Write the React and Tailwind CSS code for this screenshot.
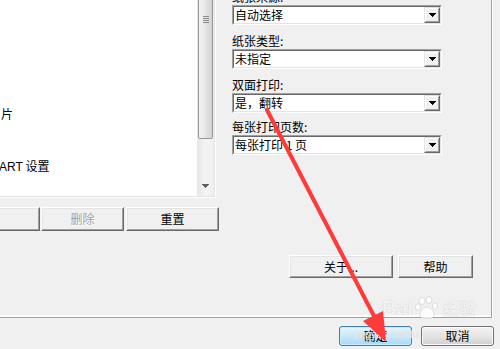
import React from 'react';

const DropArrow = () => (
  <svg width="7" height="4" viewBox="0 0 7 4" className="block">
    <path d="M0 0h7v1H0zM1 1h5v1H1zM2 2h3v1H2zM3 3h1v1H3z" fill="#000" />
  </svg>
);

const Combo = ({ value }) => (
  <div className="w-[210px] h-[20px] border border-t-[#a0a0a0] border-l-[#a0a0a0] border-r-white border-b-white">
    <div className="h-full flex items-stretch bg-white border border-t-[#696969] border-l-[#696969] border-r-[#e3e3e3] border-b-[#e3e3e3]">
      <span className="flex-1 pl-[1px] text-[12px] leading-[16px] text-black whitespace-nowrap">{value}</span>
      <div className="w-[16px] h-[16px] bg-[#f0f0f0] border border-t-[#e3e3e3] border-l-[#e3e3e3] border-r-[#696969] border-b-[#696969]">
        <div className="h-full flex items-center justify-center border border-t-white border-l-white border-r-[#a0a0a0] border-b-[#a0a0a0]">
          <DropArrow />
        </div>
      </div>
    </div>
  </div>
);

const Label = ({ children, className }) => (
  <div className={`h-[14px] text-[12px] leading-[14px] text-black whitespace-nowrap ${className}`}>{children}</div>
);

const ClassicBtn = ({ className, children, disabled }) => (
  <div className={`shrink-0 bg-[#f0f0f0] border border-t-white border-l-white border-r-[#696969] border-b-[#696969] ${className}`}>
    <div className="h-full flex items-center justify-center border border-t-[#e3e3e3] border-l-[#e3e3e3] border-r-[#a0a0a0] border-b-[#a0a0a0]">
      <span
        className={
          disabled
            ? 'text-[12px] leading-[14px] text-[#a0a0a0] [text-shadow:1px_1px_0_#ffffff]'
            : 'text-[12px] leading-[14px] text-black'
        }
      >
        {children}
      </span>
    </div>
  </div>
);

export default function App() {
  return (
    <div className="relative w-[500px] h-[349px] overflow-hidden bg-[#f0f0f0] font-['Noto_Sans_CJK_SC','Liberation_Sans',sans-serif]">
      {/* tab page */}
      <div className="w-[492px] h-[318px] flex border-r border-b border-[#a0a0a0] shadow-[1px_0_0_#ffffff,inset_0_-2px_0_#ffffff]">
        {/* left column: list + buttons */}
        <div className="w-[218px] shrink-0 flex flex-col">
          <div className="w-[216px] h-[198px] flex border-r border-b border-r-white border-b-white">
            <div className="flex-1 flex border-r border-b border-r-[#e3e3e3] border-b-[#e3e3e3]">
              <div className="flex-1 bg-white flex flex-col text-[12px] leading-[14px] text-black">
                <div className="mt-[107px] ml-[1px]">片</div>
                <div className="mt-[38px] -ml-[1px] whitespace-nowrap">
                  <span className="font-['Liberation_Sans',sans-serif]">ART</span> 设置
                </div>
              </div>
              {/* scrollbar */}
              <div className="w-[17px] flex flex-col bg-gradient-to-r from-[#e6e6e6] via-[#f4f4f4] to-[#eeeeee]">
                <div className="-mt-[4px] mx-[1px] h-[143px] rounded-[2px] border border-[#979797] bg-gradient-to-r from-[#f4f4f4] via-[#e6e6e6] to-[#d2d2d2] flex flex-col items-center pt-[19px] gap-[1px]">
                  <div className="w-[6px] h-[1px] bg-[#8a8a8a]" />
                  <div className="w-[6px] h-[1px] bg-[#8a8a8a]" />
                  <div className="w-[6px] h-[1px] bg-[#8a8a8a]" />
                  <div className="w-[6px] h-[1px] bg-[#8a8a8a]" />
                </div>
                <div className="flex-1" />
                <div className="h-[17px] flex items-center justify-center pb-[3px]">
                  <svg width="7" height="4" viewBox="0 0 7 4">
                    <path d="M0 0h7v1H0zM1 1h5v1H1zM2 2h3v1H2zM3 3h1v1H3z" fill="#5f5f5f" />
                  </svg>
                </div>
              </div>
            </div>
          </div>
          <div className="mt-[9px] -ml-[71px] flex gap-[1px]">
            <ClassicBtn className="w-[111px] h-[24px]">添加</ClassicBtn>
            <ClassicBtn className="w-[83px] h-[24px]" disabled>删除</ClassicBtn>
            <ClassicBtn className="w-[93px] h-[24px] ml-[1px]">重置</ClassicBtn>
          </div>
        </div>

        {/* right column: settings */}
        <div className="flex-1 flex flex-col pl-[14px] pt-[1px]">
          <Label className="-mt-[11px]">纸张来源:</Label>
          <div className="mt-[1px]"><Combo value="自动选择" /></div>
          <Label className="mt-[9px]">纸张类型:</Label>
          <div className="mt-[1px]"><Combo value="未指定" /></div>
          <Label className="mt-[9px]">双面打印:</Label>
          <div className="mt-[1px]"><Combo value="是，翻转" /></div>
          <Label className="mt-[7px]">每张打印页数:</Label>
          <div className="mt-[1px]"><Combo value="每张打印 1 页" /></div>
          <div className="mt-[100px] ml-[57px] flex gap-[5px]">
            <ClassicBtn className="w-[104px] h-[23px]">关于...</ClassicBtn>
            <ClassicBtn className="w-[75px] h-[23px]">帮助</ClassicBtn>
          </div>
        </div>
      </div>

      {/* bottom buttons */}
      <div className="flex justify-end gap-[9px] pt-[8px] pr-[6px]">
        <div className="w-[73px] h-[20px] rounded-[3px] border border-[#3c7fb1] bg-gradient-to-b from-[#eaf6fd] via-[#c9e8f9] to-[#a7d9f5] shadow-[inset_0_0_0_1px_#c6ecff] flex items-center justify-center text-[12px] leading-[14px] text-black">
          确定
        </div>
        <div className="w-[73px] h-[20px] rounded-[3px] border border-[#707070] bg-gradient-to-b from-[#f2f2f2] via-[#e6e6e6] to-[#cfcfcf] shadow-[inset_0_0_0_1px_#fcfcfc] flex items-center justify-center text-[12px] leading-[14px] text-black">
          取消
        </div>
      </div>

      {/* watermark */}
      <div className="absolute left-[382px] top-[296px] flex items-center gap-[2px] text-white/80 [text-shadow:0_0_1px_#b8b8b8] pointer-events-none">
        <span className="font-['Liberation_Sans',sans-serif] text-[20px] leading-[22px] font-bold">Bai</span>
        <svg width="26" height="24" viewBox="0 0 26 24" className="opacity-80">
          <g fill="#ffffff" stroke="#c4c4c4" strokeWidth="0.6">
            <ellipse cx="7" cy="5" rx="3" ry="3.6" />
            <ellipse cx="14" cy="4" rx="3" ry="3.6" />
            <ellipse cx="3" cy="11" rx="2.6" ry="3.2" />
            <ellipse cx="20" cy="10" rx="2.6" ry="3.2" />
            <path d="M5 19c0-5 4-8 7-8s7 3 7 8c0 3-3 4-7 3-4 1-7 0-7-3z" />
          </g>
        </svg>
        <span className="text-[16px] leading-[20px] font-bold">经验</span>
      </div>
      <div className="absolute left-[354px] top-[328px] font-['Liberation_Sans',sans-serif] text-[11px] leading-[12px] text-white/60 [text-shadow:0_0_1px_#c8c8c8] pointer-events-none">
        jingyan.baidu.com
      </div>

      {/* red annotation arrow */}
      <svg className="absolute left-0 top-0 pointer-events-none" width="500" height="349" viewBox="0 0 500 349">
        <line x1="267" y1="110" x2="375" y2="318" stroke="#ff3a3a" strokeWidth="4" strokeLinecap="round" />
        <path d="M386 342 L363 321 L383 311 Z" fill="#ff3a3a" />
      </svg>
    </div>
  );
}
